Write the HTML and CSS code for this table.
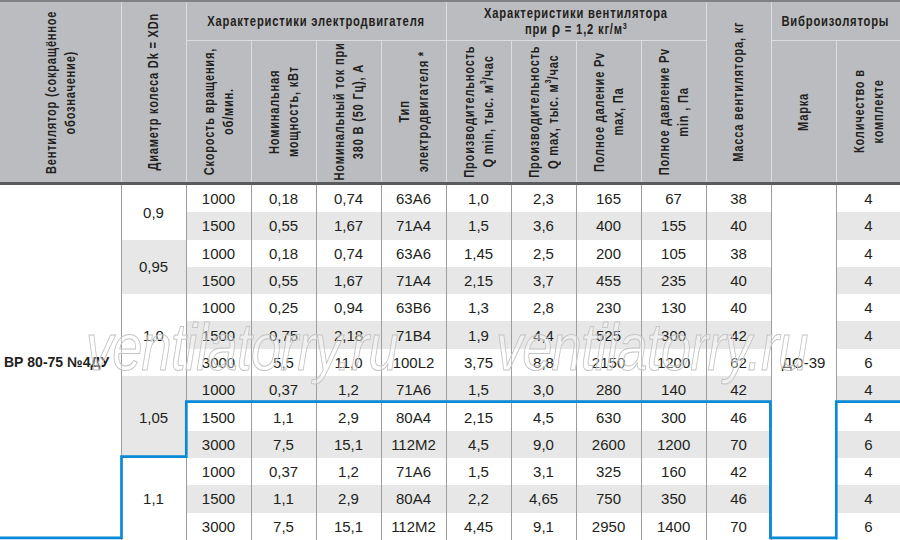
FILE: index.html
```html
<!DOCTYPE html>
<html lang="ru">
<head>
<meta charset="utf-8">
<title>ВР 80-75 №4ДУ</title>
<link rel="stylesheet" href="styles.css">
</head>
<body>
<div class="wrap">
<table class="spec">
  <colgroup>
    <col class="c-name">
    <col class="c"><col class="c"><col class="c"><col class="c"><col class="c"><col class="c">
    <col class="c"><col class="c"><col class="c"><col class="c"><col class="c">
    <col class="c-last">
  </colgroup>
  <thead>
    <tr class="r1">
      <th rowspan="2" class="tall first"><div class="vcell vtall"><span class="v">Вентилятор (сокращённое<br>обозначение)</span></div></th>
      <th rowspan="2" class="tall"><div class="vcell vtall"><span class="v">Диаметр колеса Dk = XDn</span></div></th>
      <th colspan="4" class="grp"><div class="hcell"><span class="h">Характеристики электродвигателя</span></div></th>
      <th colspan="4" class="grp"><div class="hcell"><span class="h">Характеристики вентилятора<br>при <span class="rho">ρ</span> = 1,2 кг/м<sup>3</sup></span></div></th>
      <th rowspan="2" class="tall"><div class="vcell vtall"><span class="v">Масса вентилятора, кг</span></div></th>
      <th colspan="2" class="grp"><div class="hcell"><span class="h">Виброизоляторы</span></div></th>
    </tr>
    <tr class="r2">
      <th><div class="vcell"><span class="v">Скорость вращения,<br>об/мин.</span></div></th>
      <th><div class="vcell"><span class="v">Номинальная<br>мощность, кВт</span></div></th>
      <th><div class="vcell"><span class="v">Номинальный ток при<br>380 В (50 Гц), А</span></div></th>
      <th><div class="vcell"><span class="v">Тип<br>электродвигателя *</span></div></th>
      <th><div class="vcell"><span class="v">Производительность<br>Q min, тыс. м<sup>3</sup>/час</span></div></th>
      <th><div class="vcell"><span class="v">Производительность<br>Q max, тыс. м<sup>3</sup>/час</span></div></th>
      <th><div class="vcell"><span class="v">Полное даление Pv<br>max, Па</span></div></th>
      <th><div class="vcell"><span class="v">Полное давление Pv<br>min , Па</span></div></th>
      <th><div class="vcell"><span class="v">Марка</span></div></th>
      <th><div class="vcell"><span class="v">Количество в<br>комплекте</span></div></th>
    </tr>
  </thead>
  <tbody>
    <tr>
      <td rowspan="13" class="name">ВР 80-75 №4ДУ</td>
      <td rowspan="2">0,9</td>
      <td>1000</td><td>0,18</td><td>0,74</td><td>63А6</td><td>1,0</td><td>2,3</td><td>165</td><td>67</td><td>38</td>
      <td rowspan="13" class="mark">ДО-39</td>
      <td>4</td>
    </tr>
    <tr class="g">
      <td>1500</td><td>0,55</td><td>1,67</td><td>71А4</td><td>1,5</td><td>3,6</td><td>400</td><td>155</td><td>40</td><td>4</td>
    </tr>
    <tr>
      <td rowspan="2" class="dg">0,95</td>
      <td>1000</td><td>0,18</td><td>0,74</td><td>63А6</td><td>1,45</td><td>2,5</td><td>200</td><td>105</td><td>38</td><td>4</td>
    </tr>
    <tr class="g">
      <td>1500</td><td>0,55</td><td>1,67</td><td>71А4</td><td>2,15</td><td>3,7</td><td>455</td><td>235</td><td>40</td><td>4</td>
    </tr>
    <tr>
      <td rowspan="3">1,0</td>
      <td>1000</td><td>0,25</td><td>0,94</td><td>63В6</td><td>1,3</td><td>2,8</td><td>230</td><td>130</td><td>40</td><td>4</td>
    </tr>
    <tr class="g">
      <td>1500</td><td>0,75</td><td>2,18</td><td>71В4</td><td>1,9</td><td>4,4</td><td>525</td><td>300</td><td>42</td><td>4</td>
    </tr>
    <tr>
      <td>3000</td><td>5,5</td><td>11,0</td><td>100L2</td><td>3,75</td><td>8,8</td><td>2150</td><td>1200</td><td>62</td><td>6</td>
    </tr>
    <tr class="g">
      <td rowspan="3">1,05</td>
      <td>1000</td><td>0,37</td><td>1,2</td><td>71А6</td><td>1,5</td><td>3,0</td><td>280</td><td>140</td><td>42</td><td>4</td>
    </tr>
    <tr>
      <td>1500</td><td>1,1</td><td>2,9</td><td>80А4</td><td>2,15</td><td>4,5</td><td>630</td><td>300</td><td>46</td><td>4</td>
    </tr>
    <tr class="g">
      <td>3000</td><td>7,5</td><td>15,1</td><td>112М2</td><td>4,5</td><td>9,0</td><td>2600</td><td>1200</td><td>70</td><td>6</td>
    </tr>
    <tr>
      <td rowspan="3">1,1</td>
      <td>1000</td><td>0,37</td><td>1,2</td><td>71А6</td><td>1,5</td><td>3,1</td><td>325</td><td>160</td><td>42</td><td>4</td>
    </tr>
    <tr class="g">
      <td>1500</td><td>1,1</td><td>2,9</td><td>80А4</td><td>2,2</td><td>4,65</td><td>750</td><td>350</td><td>46</td><td>4</td>
    </tr>
    <tr>
      <td>3000</td><td>7,5</td><td>15,1</td><td>112М2</td><td>4,45</td><td>9,1</td><td>2950</td><td>1400</td><td>70</td><td>6</td>
    </tr>
  </tbody>
</table>

<svg class="frame" width="900" height="540" viewBox="0 0 900 540" aria-hidden="true">
  <path d="M0 537.8 H121.5 V456.6 H186.3 V401.6 H770.4 V537.8 H836.3 V401.6 H900" fill="none" stroke="#0a8ad6" stroke-width="2.7"/>
</svg>
<span class="wm wm1">ventilatorry.ru</span>
<span class="wm wm2">ventilatorry.ru</span>
</div>
</body>
</html>
```
FILE: styles.css
```css
body {
  margin: 0;
  background: #fff;
}

.wrap {
  position: relative;
  width: 900px;
  height: 540px;
  overflow: hidden;
}

.spec {
  width: 900px;
  border-collapse: collapse;
  table-layout: fixed;
  font-family: "Liberation Sans", Arial, sans-serif;
  color: #231f20;
}

.c-name { width: 121px; }
.c { width: 65px; }
.c-last { width: 64px; }

.spec thead th {
  background: #bbbcbf;
  border-left: 1px solid #dcdddf;
  padding: 0;
  text-align: center;
  vertical-align: middle;
  font-family: "Liberation Sans", Arial, sans-serif;
  font-weight: bold;
  font-size: 14px;
  line-height: 16px;
  letter-spacing: 1px;
  color: #231f20;
  overflow: visible;
}

.spec thead th.first { border-left: none; }

.spec thead tr.r1 th {
  border-top: 2px solid #808184;
  height: 38px;
}

.spec thead th.grp {
  border-bottom: 1px solid #dcdddf;
}

.spec thead tr.r2 th {
  height: 141px;
  border-bottom: 3px solid #5a5b5d;
}

.spec thead th.tall {
  border-bottom: 3px solid #5a5b5d;
}

.vcell {
  height: 141px;
  display: flex;
  align-items: center;
  justify-content: center;
}

.vcell.vtall {
  height: 170px;
}

.hcell {
  display: flex;
  justify-content: center;
  align-items: center;
  white-space: nowrap;
}

.v {
  display: block;
  writing-mode: vertical-rl;
  transform: rotate(180deg) scaleY(0.79);
  white-space: nowrap;
  line-height: 18.5px;
  text-align: center;
  flex: none;
}

.h {
  display: block;
  flex: none;
  transform: scaleX(0.8);
  text-align: center;
  white-space: nowrap;
}

.spec sup {
  font-size: 9px;
  line-height: 0;
  vertical-align: 5px;
  letter-spacing: 0;
}

.rho {
  font-size: 17px;
}

.spec tbody td {
  height: 27.3px;
  padding: 0;
  text-align: center;
  vertical-align: middle;
  border-left: 1px solid #9d9d9d;
  font-size: 15px;
  line-height: 17px;
  background: #fff;
}

.spec tbody tr.g td { background: #e6e7e6; }
.spec tbody td.dg { background: #e6e7e6; }

.spec tbody td.name {
  border-left: none;
  text-align: left;
  padding-left: 4px;
  font-weight: bold;
  font-size: 14px;
}

.frame {
  position: absolute;
  left: 0;
  top: 0;
  pointer-events: none;
}

.wm {
  position: absolute;
  top: 314px;
  font-family: "Liberation Sans", Arial, sans-serif;
  font-style: italic;
  font-size: 66px;
  line-height: 66px;
  letter-spacing: -1px;
  color: rgba(255, 255, 255, 0.35);
  -webkit-text-stroke: 1px #c4c4c4;
  white-space: nowrap;
  transform: scaleX(0.82);
  transform-origin: left top;
  pointer-events: none;
}

.wm1 { left: 86px; }
.wm2 { left: 496px; }
```
